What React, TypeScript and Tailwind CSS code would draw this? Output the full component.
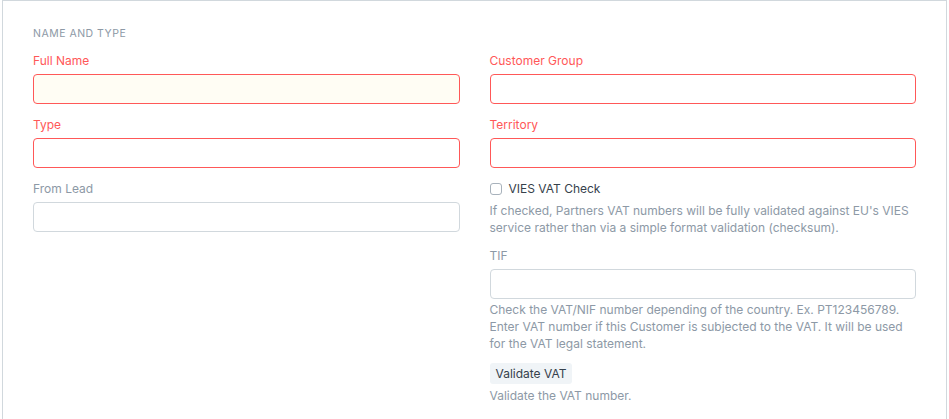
import React from 'react';

const font = { fontFamily: 'Inter, "Noto Sans", sans-serif' };

function Field({ label, required, yellow }: { label: string; required?: boolean; yellow?: boolean }) {
  return (
    <div className="mb-[12px]">
      <div className={`text-[12px] leading-[18px] mb-[4px] ${required ? 'text-[#ff5858]' : 'text-[#8d99a6]'}`}>{label}</div>
      <div
        className={`h-[30px] rounded-[4px] border ${required ? 'border-[#ff5858]' : 'border-[#d1d8dd]'} ${yellow ? 'bg-[#fffdf4]' : 'bg-white'}`}
      />
    </div>
  );
}

export default function App() {
  return (
    <div className="w-[949px] h-[419px] bg-white overflow-hidden" style={font}>
      <div className="ml-[2px] w-[945px] h-[440px] border border-[#d1d8dd] border-b-0 pt-[26px] px-[30px]">
        <div className="text-[10.5px] tracking-[0.5px] uppercase text-[#8d99a6] leading-[14px] mb-[11px]">Name and Type</div>
        <div className="grid grid-cols-2 gap-x-[30px]">
          {/* Left column */}
          <div>
            <Field label="Full Name" required yellow />
            <Field label="Type" required />
            <Field label="From Lead" />
          </div>

          {/* Right column */}
          <div>
            <Field label="Customer Group" required />
            <Field label="Territory" required />
            <div className="flex items-center gap-[7px] h-[18px]">
              <span className="w-[12px] h-[12px] rounded-[3px] border border-[#a8b2bc] bg-white" />
              <span className="text-[12px] text-[#36414c]">VIES VAT Check</span>
            </div>
            <div className="text-[12px] leading-[17px] text-[#8d99a6] mt-[4px] mb-[11px]">
              If checked, Partners VAT numbers will be fully validated against EU's VIES service rather than via a simple format validation (checksum).
            </div>
            <div className="text-[12px] leading-[18px] mb-[4px] text-[#8d99a6]">TIF</div>
            <div className="h-[30px] rounded-[4px] border border-[#d1d8dd] bg-white" />
            <div className="text-[12px] leading-[17px] text-[#8d99a6] mt-[2px]">
              Check the VAT/NIF number depending of the country. Ex. PT123456789.<br />
              Enter VAT number if this Customer is subjected to the VAT. It will be used for the VAT legal statement.
            </div>
            <button className="block mt-[11px] h-[21px] px-[6px] rounded-[3px] bg-[#f0f4f7] text-[12px] text-[#36414c]">Validate VAT</button>
            <div className="text-[12px] leading-[17px] text-[#8d99a6] mt-[3px]">Validate the VAT number.</div>
          </div>
        </div>
      </div>
    </div>
  );
}
